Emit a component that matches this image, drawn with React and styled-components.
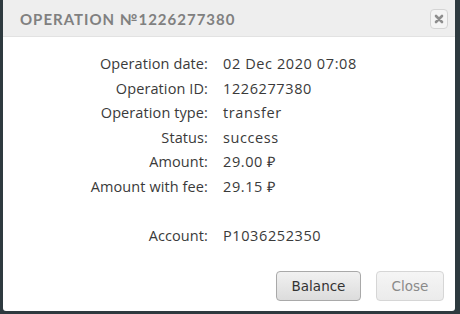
import React from "react";
import styled, { createGlobalStyle } from "styled-components";

const Global = createGlobalStyle`
  html, body { margin: 0; padding: 0; background: #2e3a3f; }
  body { width: 460px; height: 314px; overflow: hidden; }
`;

const Dialog = styled.div`
  margin-left: 3px;
  width: 452px;
  height: 311px;
  background: #fff;
  border-radius: 0 0 3px 3px;
  display: flex;
  flex-direction: column;
  box-sizing: border-box;
`;

const Header = styled.div`
  height: 37px;
  background: #eeeeee;
  border-bottom: 1px solid #e2e2e2;
  display: flex;
  align-items: center;
  justify-content: space-between;
  padding: 0 8px 0 17px;
  box-sizing: border-box;
`;

const Title = styled.div`
  font-family: "Lato", "Open Sans", sans-serif;
  font-size: 15px;
  font-weight: 700;
  letter-spacing: 1px;
  color: #808080;
  padding-top: 1px;
`;

const CloseX = styled.button`
  width: 18px;
  height: 20px;
  border: 1px solid #d4d4d4;
  border-radius: 4px;
  background: #f4f4f4;
  padding: 0;
  display: flex;
  align-items: center;
  justify-content: center;
  margin-top: 1px;
  margin-right: -1px;
`;

const Body = styled.div`
  flex: 1;
  padding-top: 15px;
  display: grid;
  grid-template-columns: 205px 1fr;
  grid-auto-rows: 24.6px;
  column-gap: 15px;
  align-content: start;
  font-family: "Open Sans", sans-serif;
  font-size: 14.5px;
  color: #3a3a3a;
`;

const Label = styled.div`
  text-align: right;
  line-height: 24.6px;
  white-space: nowrap;
  letter-spacing: 0.1px;
`;

const Value = styled.div`
  line-height: 24.6px;
  white-space: nowrap;
  letter-spacing: 0.6px;
`;

const Spacer = styled.div`
  grid-column: 1 / span 2;
  height: 28px;
`;

const Footer = styled.div`
  display: flex;
  justify-content: flex-end;
  gap: 15px;
  padding: 0 11px 10px 0;
`;

const Button = styled.button`
  height: 30px;
  width: ${(p) => p.$w}px;
  padding: 0;
  border-radius: 4px;
  font-family: "DejaVu Sans", sans-serif;
  font-size: 13.5px;
  border: 1px solid ${(p) => (p.$disabled ? "#d6d6d6" : "#a9a9a9")};
  color: ${(p) => (p.$disabled ? "#8a8a8a" : "#333")};
  background: ${(p) =>
    p.$disabled
      ? "linear-gradient(#f5f5f5, #ebebeb)"
      : "linear-gradient(#f1f1f1, #dcdcdc)"};
`;

const rows = [
  ["Operation date:", "02 Dec 2020 07:08"],
  ["Operation ID:", "1226277380"],
  ["Operation type:", "transfer"],
  ["Status:", "success"],
  ["Amount:", "29.00 ₽"],
  ["Amount with fee:", "29.15 ₽"],
];

export default function App() {
  return (
    <>
      <Global />
      <Dialog>
        <Header>
          <Title>OPERATION №1226277380</Title>
          <CloseX aria-label="close">
            <svg width="10" height="10" viewBox="0 0 10 10">
              <path d="M2 2L8 8M8 2L2 8" stroke="#8e8e8e" strokeWidth="2.6" strokeLinecap="round" />
            </svg>
          </CloseX>
        </Header>
        <Body>
          {rows.map(([l, v]) => (
            <React.Fragment key={l}>
              <Label>{l}</Label>
              <Value>{v}</Value>
            </React.Fragment>
          ))}
          <Spacer />
          <Label>Account:</Label>
          <Value>P1036252350</Value>
        </Body>
        <Footer>
          <Button $w={85}>Balance</Button>
          <Button $w={68} $disabled>Close</Button>
        </Footer>
      </Dialog>
    </>
  );
}
